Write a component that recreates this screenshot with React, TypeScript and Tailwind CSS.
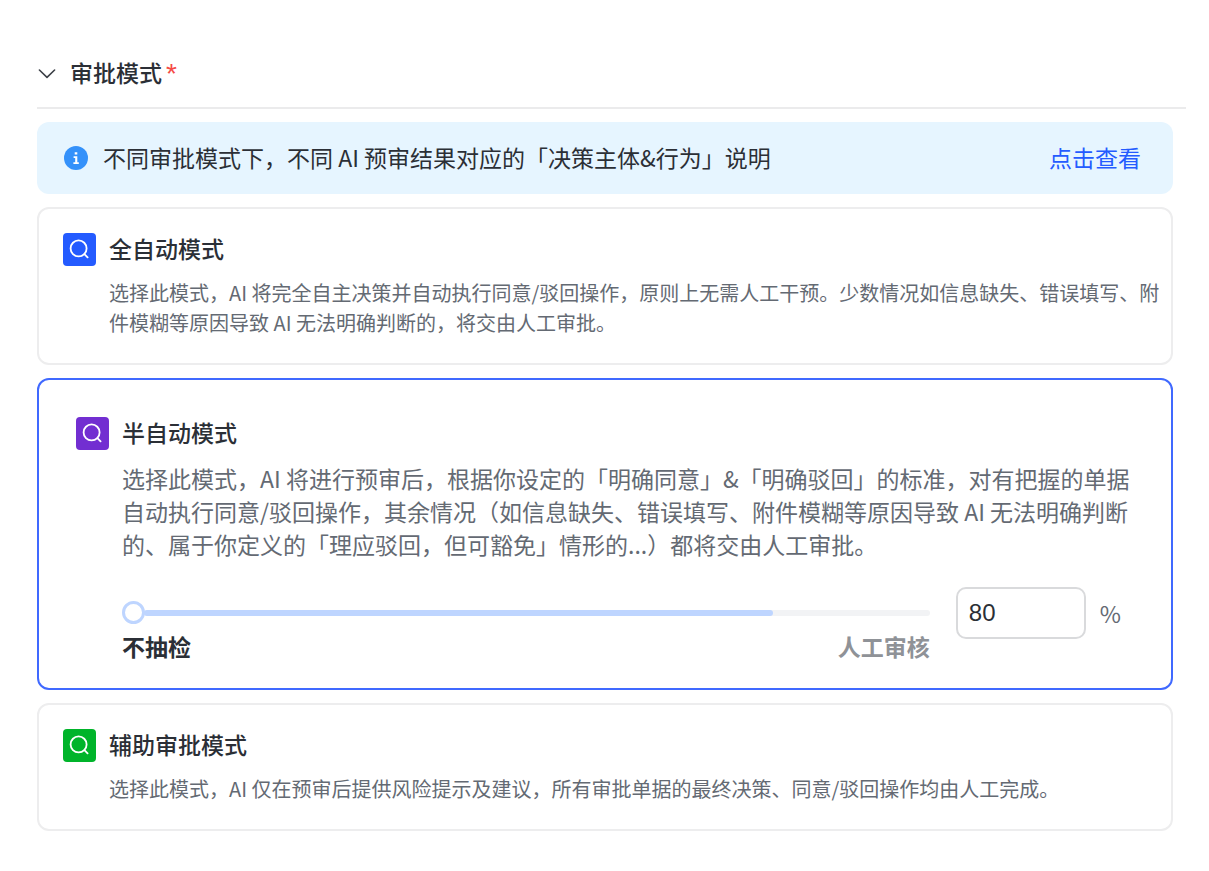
import { useState } from 'react'
import type { ReactNode } from 'react'
import clsx from 'clsx'

type Mode = 'auto' | 'semi' | 'assist'

const SearchBadge = ({ className }: { className: string }) => (
  <span className={clsx('flex size-[33px] shrink-0 rounded', className)}>
    <svg viewBox="0 0 33 33" className="size-full" fill="none" stroke="#fff" strokeWidth="1.8" strokeLinecap="round" aria-hidden="true">
      <circle cx="15.6" cy="15.4" r="8" />
      <path d="M21.4 21.2 L24.6 24.4" />
    </svg>
  </span>
)

const InfoIcon = () => (
  <svg viewBox="0 0 24 24" className="size-6 shrink-0" aria-hidden="true">
    <circle cx="12" cy="12" r="12" fill="#3491fa" />
    <path d="M10.7 6.2h2.6v2.4h-2.6z M9.6 10.2h3.7v6.1h1.5v1.7H9.4v-1.7h1.8v-4.4H9.6z" fill="#fff" />
  </svg>
)

interface ModeCardProps {
  mode: Mode
  title: string
  badge: string
  current: Mode
  onSelect: (mode: Mode) => void
  className: string
  textClassName: string
  description: string
  children?: ReactNode
}

const ModeCard = ({ mode, title, badge, current, onSelect, className, textClassName, description, children }: ModeCardProps) => (
  <div className={clsx('rounded-xl border-2', current === mode ? 'border-[#4069ff]' : 'border-[#ededee]', className)}>
    <label className="relative flex cursor-pointer gap-[13px]">
      <input type="radio" name="mode" className="sr-only" checked={current === mode} onChange={() => onSelect(mode)} />
      <SearchBadge className={badge} />
      <span className="flex-1">
        <span className="block text-[23px] leading-[31px] font-medium text-[#2b2f36]">{title}</span>
        <span className={clsx('block text-[#646a73]', textClassName)}>{description}</span>
      </span>
    </label>
    {children}
  </div>
)

const App = () => {
  const [open, setOpen] = useState(true)
  const [mode, setMode] = useState<Mode>('semi')
  const [start, setStart] = useState(0)
  const [rate, setRate] = useState('80')

  return (
    <main className="min-h-screen bg-white pt-[55px] pr-[23px] pb-10 pl-[37px] font-['Noto_Sans_CJK_SC',sans-serif]" lang="zh-CN">
      <h2 className="border-b-2 border-[#ebebec] pb-[18px]">
        <button type="button" className="flex items-center text-[23px] leading-[30px] font-medium text-[#2b2f36]" aria-expanded={open} onClick={() => setOpen(!open)}>
          <svg viewBox="0 0 20 20" className="mr-[13px] size-5" fill="none" stroke="#3c4047" strokeWidth="1.6" strokeLinecap="round" strokeLinejoin="round" aria-hidden="true">
            <path d="M2.4 8 L10 15.4 L17.6 8" />
          </svg>
          审批模式
          <span className="ml-1 pt-1 font-['Liberation_Sans',sans-serif] text-[28px] font-normal text-[#f54a45]">*</span>
        </button>
      </h2>

      {open && (
        <div className="mt-[13px] mr-[13px] flex flex-col gap-[13px]">
          <div className="flex items-center rounded-xl bg-[#e6f5ff] py-[18px] pr-8 pl-[27px] text-[23px] leading-[34px]">
            <InfoIcon />
            <p className="ml-[15px] flex-1 pb-[2px] text-[#2b2f36]">不同审批模式下，不同 AI 预审结果对应的「决策主体&amp;行为」说明</p>
            <a href="#detail" className="pb-[2px] text-[#245bff]">点击查看</a>
          </div>

          <ModeCard
            mode="auto"
            title="全自动模式"
            badge="bg-[#245bff]"
            current={mode}
            onSelect={setMode}
            className="pt-6 pr-2 pb-[25px] pl-6"
            textClassName="mt-[14px] text-[20px] leading-[30px]"
            description="选择此模式，AI 将完全自主决策并自动执行同意/驳回操作，原则上无需人工干预。少数情况如信息缺失、错误填写、附件模糊等原因导致 AI 无法明确判断的，将交由人工审批。"
          />

          <ModeCard
            mode="semi"
            title="半自动模式"
            badge="bg-[#722ed1]"
            current={mode}
            onSelect={setMode}
            className="pt-[37px] pb-[25px] pl-[37px]"
            textClassName="mt-[14px] mr-6 text-[23px] leading-[33px]"
            description="选择此模式，AI 将进行预审后，根据你设定的「明确同意」&「明确驳回」的标准，对有把握的单据自动执行同意/驳回操作，其余情况（如信息缺失、错误填写、附件模糊等原因导致 AI 无法明确判断的、属于你定义的「理应驳回，但可豁免」情形的...）都将交由人工审批。"
          >
            <div className="mt-[26px] mr-[50px] ml-[46px] flex items-start">
              <div className="flex-1 pt-[14px]">
                <div className="grid items-center">
                  <div className="col-start-1 row-start-1 ml-[22px] h-[6px] rounded-full bg-[#f2f3f5]">
                    <div className="h-full rounded-full bg-[#bed5ff]" style={{ width: `${Number(rate) || 0}%` }} />
                  </div>
                  <input
                    type="range"
                    aria-label="抽检比例"
                    min={0}
                    max={100}
                    value={start}
                    onChange={e => setStart(Number(e.target.value))}
                    className="col-start-1 row-start-1 h-[23px] w-full cursor-pointer appearance-none bg-transparent [&::-webkit-slider-thumb]:size-[23px] [&::-webkit-slider-thumb]:appearance-none [&::-webkit-slider-thumb]:rounded-full [&::-webkit-slider-thumb]:border-[3px] [&::-webkit-slider-thumb]:border-[#bed5ff] [&::-webkit-slider-thumb]:bg-white"
                  />
                </div>
                <div className="mt-[5px] flex justify-between text-[23px] leading-[34px] font-bold">
                  <span className="text-[#2b2f36]">不抽检</span>
                  <span className="text-[#8f9297]">人工审核</span>
                </div>
              </div>
              <label className="ml-[26px] flex items-center gap-[14px] text-[23px] text-[#646a73]">
                <input
                  type="text"
                  inputMode="numeric"
                  value={rate}
                  onChange={e => setRate(e.target.value)}
                  className="h-[52px] w-[130px] rounded-[10px] border-2 border-[#d9dadc] px-[11px] font-['Liberation_Sans',sans-serif] text-[24px] text-[#2b2f36] outline-none"
                />
                %
              </label>
            </div>
          </ModeCard>

          <ModeCard
            mode="assist"
            title="辅助审批模式"
            badge="bg-[#00b42a]"
            current={mode}
            onSelect={setMode}
            className="pt-6 pr-2 pb-[25px] pl-6"
            textClassName="mt-[14px] text-[20px] leading-[30px]"
            description="选择此模式，AI 仅在预审后提供风险提示及建议，所有审批单据的最终决策、同意/驳回操作均由人工完成。"
          />
        </div>
      )}
    </main>
  )
}

export default App
